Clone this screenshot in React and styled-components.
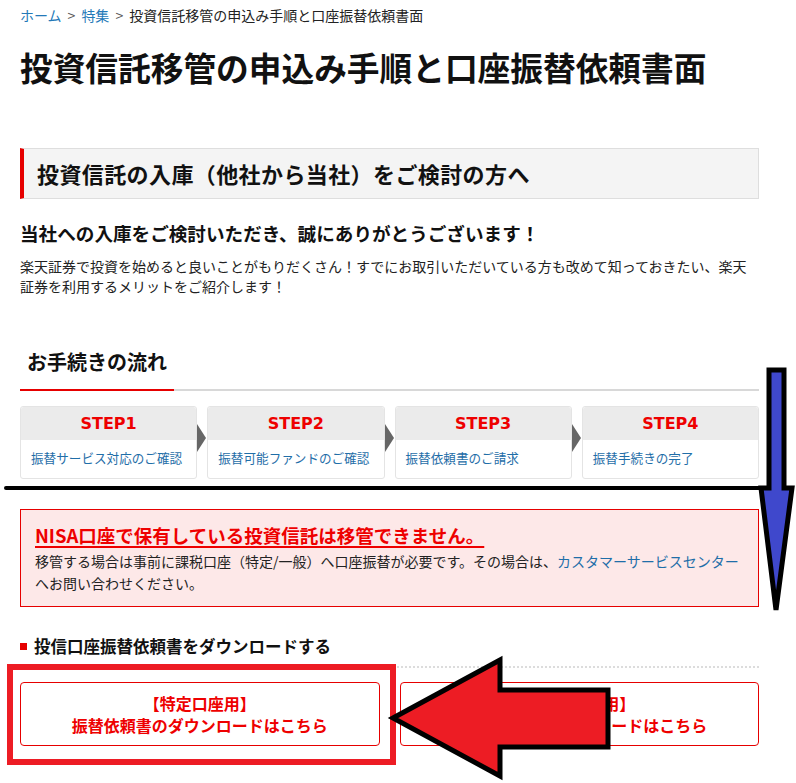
import React from "react";
import styled, { createGlobalStyle } from "styled-components";

const GlobalStyle = createGlobalStyle`
  html, body {
    margin: 0;
    padding: 0;
    background: #fff;
  }
  body {
    font-family: "Noto Sans CJK JP", "Noto Sans", sans-serif;
    color: #222;
  }
  * { box-sizing: border-box; }
`;

const steps = [
  { label: "STEP1", text: "振替サービス対応のご確認" },
  { label: "STEP2", text: "振替可能ファンドのご確認" },
  { label: "STEP3", text: "振替依頼書のご請求" },
  { label: "STEP4", text: "振替手続きの完了" },
];

const App = () => {
  return (
    <Page>
      <GlobalStyle />
      <Content>
        <Breadcrumb>
          <CrumbLink>ホーム</CrumbLink>
          <Sep>&gt;</Sep>
          <CrumbLink>特集</CrumbLink>
          <Sep>&gt;</Sep>
          <span>投資信託移管の申込み手順と口座振替依頼書面</span>
        </Breadcrumb>

        <Title>投資信託移管の申込み手順と口座振替依頼書面</Title>

        <SectionBox>投資信託の入庫（他社から当社）をご検討の方へ</SectionBox>

        <Lead>当社への入庫をご検討いただき、誠にありがとうございます！</Lead>
        <Body>
          楽天証券で投資を始めると良いことがもりだくさん！すでにお取引いただいている方も改めて知っておきたい、楽天証券を利用するメリットをご紹介します！
        </Body>

        <FlowHeading>お手続きの流れ</FlowHeading>
        <FlowRule />

        <StepRow>
          {steps.map((s, i) => (
            <StepCard key={s.label} $last={i === steps.length - 1}>
              <StepHead>{s.label}</StepHead>
              <StepBody>{s.text}</StepBody>
            </StepCard>
          ))}
        </StepRow>

        <Alert>
          <AlertTitle>NISA口座で保有している投資信託は移管できません。</AlertTitle>
          <AlertText>
            移管する場合は事前に課税口座（特定/一般）へ口座振替が必要です。その場合は、
            <TextLink>カスタマーサービスセンター</TextLink>
            へお問い合わせください。
          </AlertText>
        </Alert>

        <DownloadHeading>
          <Bullet />
          投信口座振替依頼書をダウンロードする
        </DownloadHeading>

        <ButtonRow>
          <DownloadButton>
            【特定口座用】
            <br />
            振替依頼書のダウンロードはこちら
          </DownloadButton>
          <DownloadButton>
            【一般口座用】
            <br />
            振替依頼書のダウンロードはこちら
          </DownloadButton>
        </ButtonRow>
      </Content>

      <Markup width="796" height="783" viewBox="0 0 796 783">
        <line x1="6" y1="488" x2="772" y2="488" stroke="#000" strokeWidth="4" strokeLinecap="round" />
        <polygon
          points="769,370 784,370 784,488 792,488 776,610 761,488 769,488"
          fill="#3f48cc"
          stroke="#000"
          strokeWidth="5"
          strokeLinejoin="miter"
        />
        <rect x="10" y="667" width="383" height="95" fill="none" stroke="#ed1c24" strokeWidth="6" />
        <polygon
          points="393,718 500,660 500,690 608,690 608,747 500,747 500,776"
          fill="#ed1c24"
          stroke="#000"
          strokeWidth="5"
          strokeLinejoin="miter"
        />
      </Markup>
    </Page>
  );
};

const Page = styled.div`
  position: relative;
  width: 796px;
  min-height: 783px;
  overflow: hidden;
`;

const Content = styled.div`
  width: 759px;
  padding-left: 20px;
`;

const Breadcrumb = styled.div`
  padding-top: 5px;
  font-size: 14px;
  line-height: 20px;
  color: #222;
`;

const CrumbLink = styled.a`
  color: #2479b8;
  text-decoration: none;
`;

const Sep = styled.span`
  color: #555;
  margin: 0 6px;
`;

const Title = styled.h1`
  margin: 19px 0 0;
  font-size: 32.7px;
  line-height: 46px;
  font-weight: 700;
  color: #111;
  white-space: nowrap;
`;

const SectionBox = styled.h2`
  margin: 58px 0 0;
  height: 51px;
  padding: 9px 13px;
  background: #f4f4f4;
  border: 1px solid #dedede;
  border-left: 4px solid #e60000;
  font-size: 22px;
  letter-spacing: 0.4px;
  line-height: 31px;
  font-weight: 700;
  color: #111;
`;

const Lead = styled.h3`
  margin: 20px 0 0;
  font-size: 18.6px;
  line-height: 28px;
  font-weight: 700;
  color: #111;
`;

const Body = styled.p`
  margin: 9px 0 0;
  font-size: 14px;
  line-height: 20px;
  color: #222;
`;

const FlowHeading = styled.h3`
  margin: 52px 0 0;
  padding: 0 0 13px 7px;
  font-size: 20px;
  line-height: 28px;
  font-weight: 700;
  color: #111;
`;

const FlowRule = styled.div`
  height: 2px;
  background: linear-gradient(to right, #e60000 154px, #d8d8d8 154px);
`;

const StepRow = styled.div`
  display: flex;
  gap: 10px;
  margin-top: 15px;
`;

const StepCard = styled.div`
  position: relative;
  flex: 1;
  height: 73px;
  border: 1px solid #e4e4e4;
  border-radius: 3px;
  background: #fff;

  &::after {
    content: "";
    display: ${(p) => (p.$last ? "none" : "block")};
    position: absolute;
    top: 17px;
    right: -10px;
    width: 0;
    height: 0;
    border-top: 14px solid transparent;
    border-bottom: 14px solid transparent;
    border-left: 9px solid #666;
  }
`;

const StepHead = styled.div`
  height: 33px;
  background: #ebebeb;
  border-radius: 3px 3px 0 0;
  color: #ee0000;
  font-size: 16px;
  font-weight: 700;
  line-height: 33px;
  text-align: center;
  font-family: "DejaVu Sans", "Noto Sans", sans-serif;
`;

const StepBody = styled.div`
  padding: 0 10px;
  height: 38px;
  font-size: 12.6px;
  line-height: 36px;
  color: #1f6ea8;
  white-space: nowrap;
`;

const Alert = styled.div`
  margin-top: 30px;
  padding: 12px 15px 12px 14px;
  border: 1px solid #e60000;
  background: #fde8e8;
`;

const AlertTitle = styled.div`
  display: inline-block;
  padding-right: 8px;
  font-size: 18.5px;
  line-height: 26px;
  font-weight: 700;
  color: #ee0000;
  text-decoration: underline;
  text-decoration-thickness: 2px;
  text-underline-offset: 3px;
`;

const AlertText = styled.p`
  margin: 2px 0 0;
  font-size: 14px;
  line-height: 22px;
  color: #222;
`;

const TextLink = styled.a`
  color: #1f6ea8;
  text-decoration: none;
`;

const DownloadHeading = styled.h3`
  display: flex;
  align-items: center;
  gap: 7px;
  margin: 27px 0 0;
  padding-bottom: 8px;
  border-bottom: 2px dotted #dcdcdc;
  font-size: 16.5px;
  line-height: 24px;
  font-weight: 700;
  color: #111;
`;

const Bullet = styled.span`
  width: 7px;
  height: 7px;
  background: #e60000;
  flex-shrink: 0;
`;

const ButtonRow = styled.div`
  display: grid;
  grid-template-columns: 1fr 1fr;
  gap: 20px;
  margin-top: 14px;
`;

const DownloadButton = styled.a`
  display: block;
  height: 64px;
  padding: 9px 0 11px;
  border: 1px solid #e60000;
  border-radius: 4px;
  color: #ee0000;
  font-size: 16px;
  line-height: 22px;
  font-weight: 700;
  text-align: center;
  text-decoration: none;
`;

const Markup = styled.svg`
  position: absolute;
  top: 0;
  left: 0;
  pointer-events: none;
`;

export default App;
